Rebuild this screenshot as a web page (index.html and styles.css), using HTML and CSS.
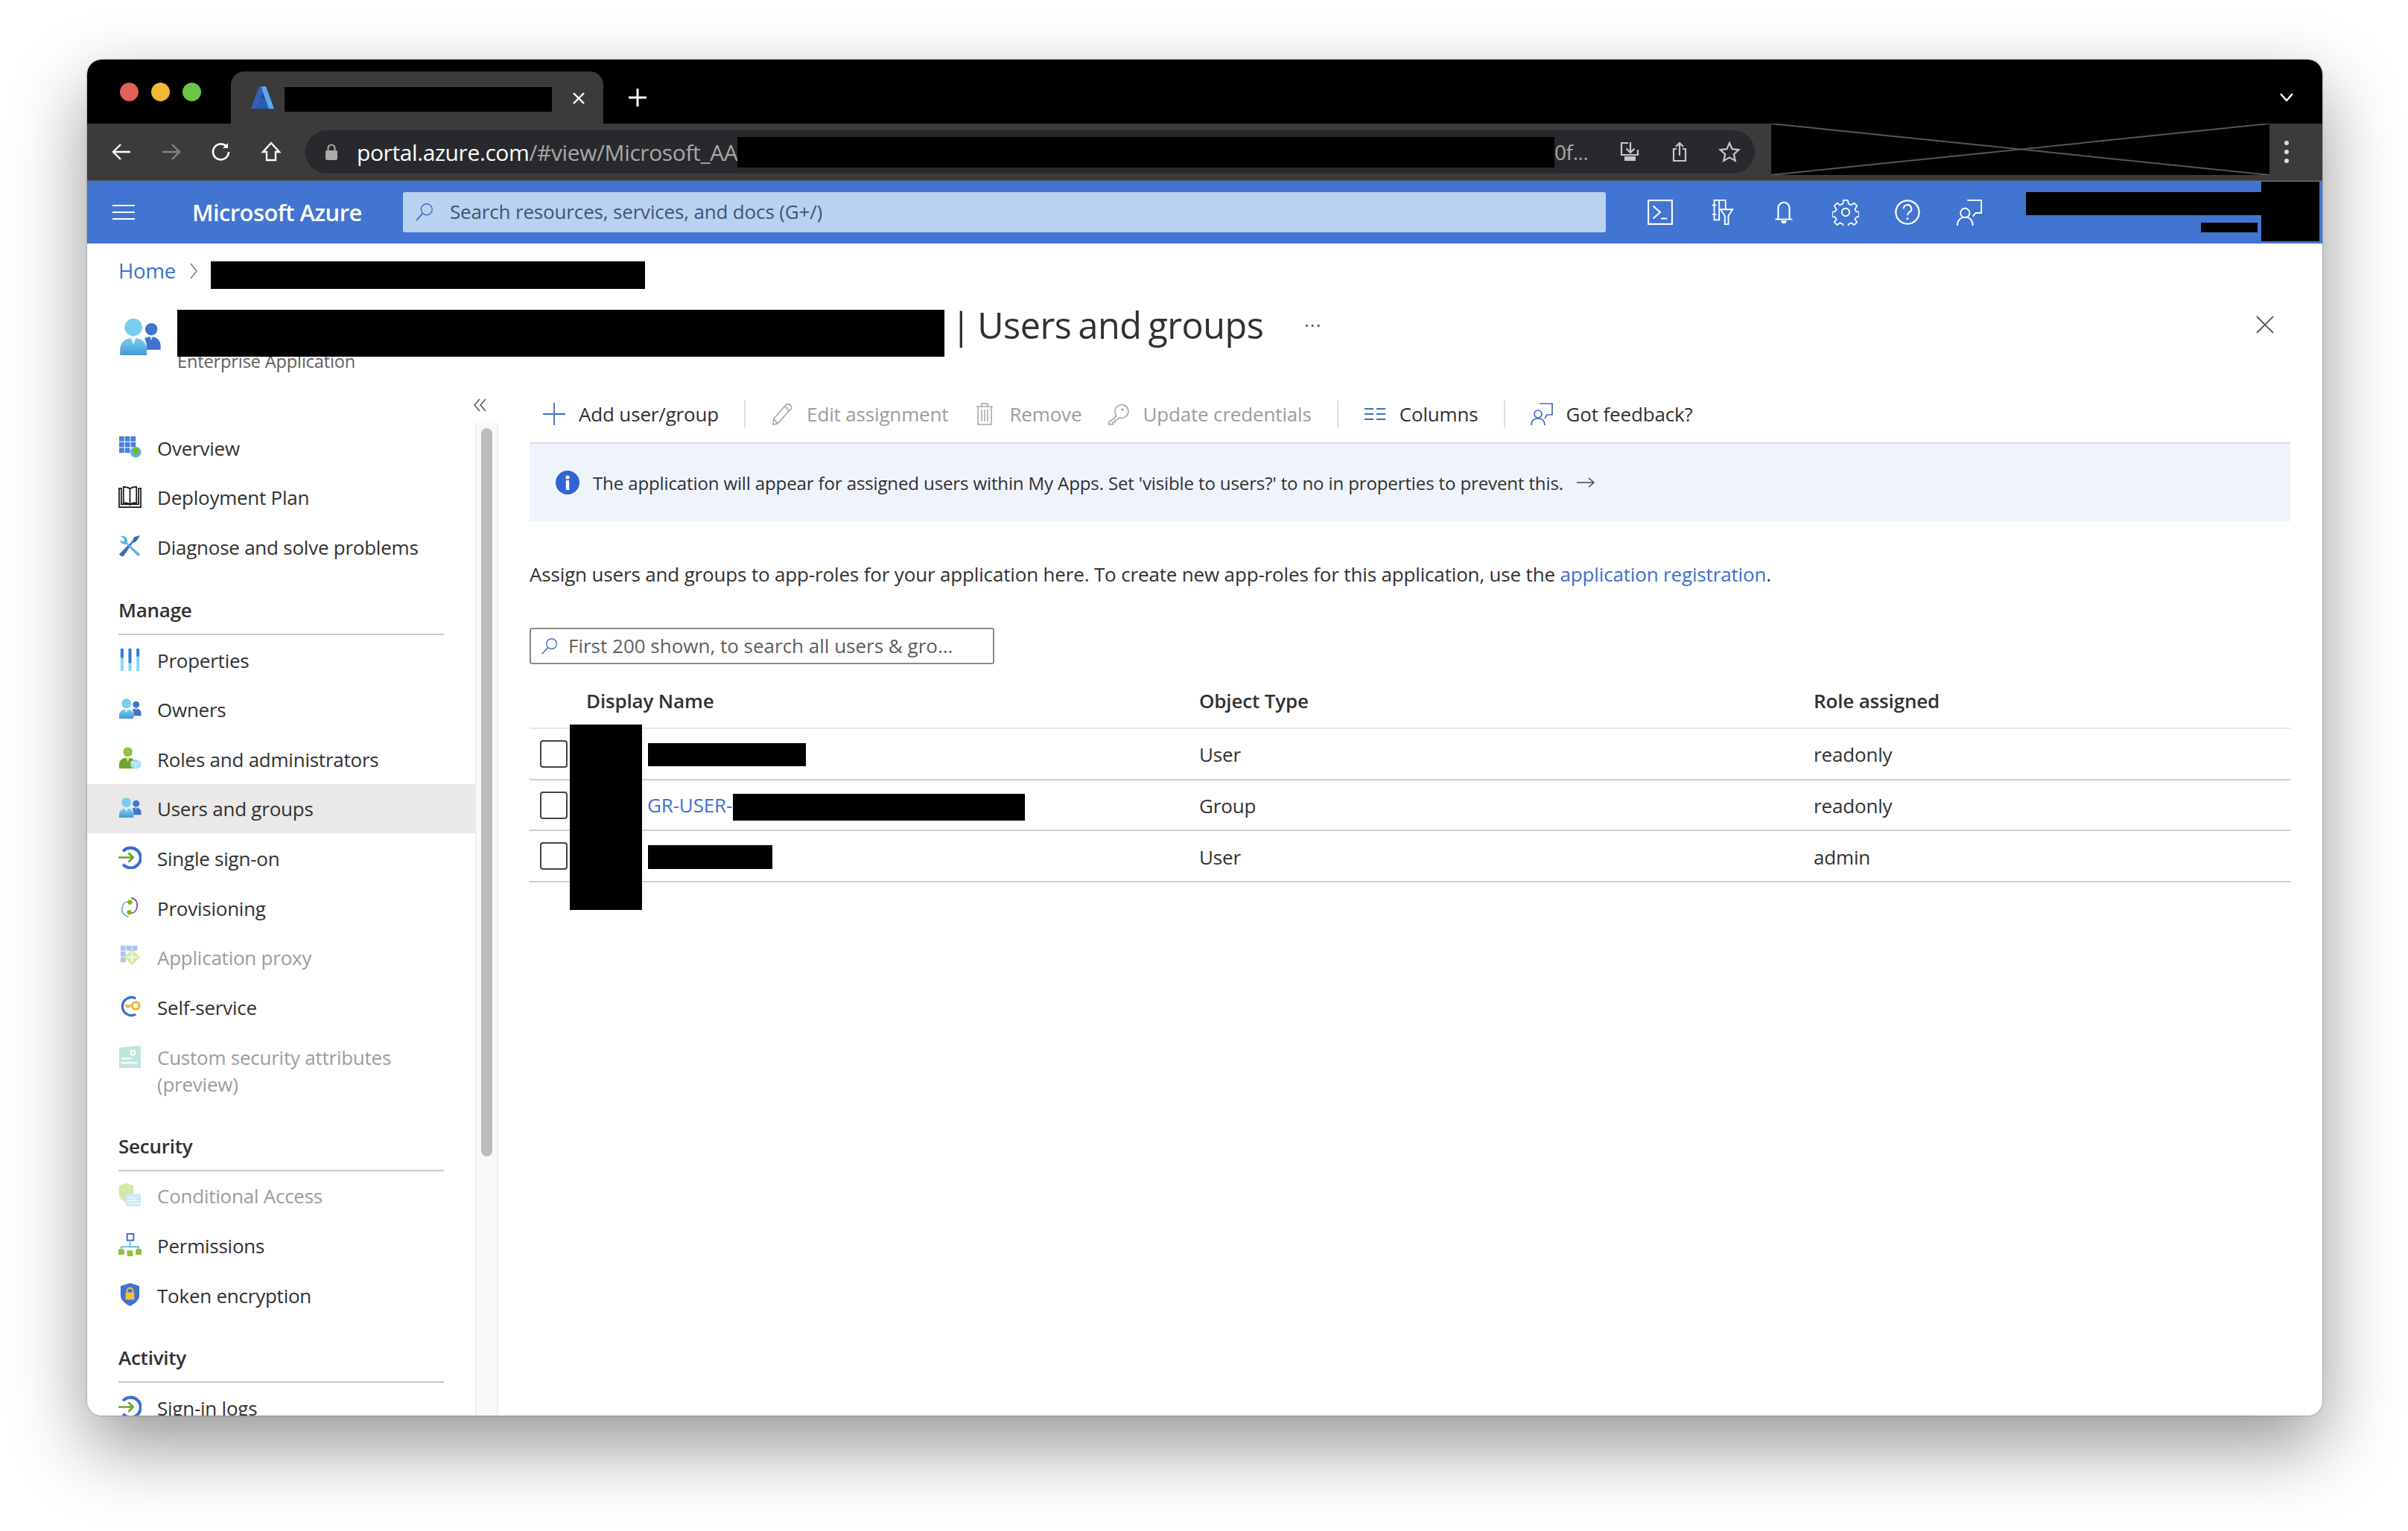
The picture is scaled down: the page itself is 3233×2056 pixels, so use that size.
FILE: index.html
```html
<!DOCTYPE html>
<html lang="en">
<head>
<meta charset="utf-8">
<title>Users and groups - Microsoft Azure</title>
<link rel="stylesheet" href="styles.css">
</head>
<body>
<svg class="defs" width="0" height="0" aria-hidden="true">
  <defs>
    <linearGradient id="gUser" x1="0" y1="0" x2="0" y2="1"><stop offset="0" stop-color="#7fd0f0"/><stop offset="1" stop-color="#3f9ad6"/></linearGradient>
    <symbol id="i-users" viewBox="0 0 32 28">
      <path d="M1 28v-4c0-6 4-9 10-9s10 3 10 9v4z" fill="url(#gUser)"/>
      <circle cx="11" cy="7" r="6.6" fill="#78cdf0"/>
      <path d="M9 15h4l-2 5z" fill="#e8f6fd"/>
      <path d="M21 24v-2c0-3-.7-5-1.6-6.5 1.100-.9 2.800-1.500 4.600-1.500 4.500 0 7.500 2.800 7.500 7v3z" fill="#3f74d0"/>
      <circle cx="24.500" cy="8.500" r="4.600" fill="#3f74d0"/>
      <path d="M23.500 14h2l-1 3z" fill="#dbe9fb"/>
    </symbol>
    <symbol id="i-signin" viewBox="0 0 30 30">
      <path d="M6 7a13 13 0 1 1 0 17" fill="none" stroke="#3a6fd0" stroke-width="4"/>
      <path d="M0 15h19M13 9l6 6-6 6" fill="none" stroke="#6aa524" stroke-width="2.600"/>
    </symbol>
  </defs>
</svg>

<div class="window">
  <header class="tabbar">
    <div class="lights"><span class="light red"></span><span class="light yellow"></span><span class="light green"></span></div>
    <div class="tab">
      <svg class="azure" viewBox="0 0 31 30"><path d="M11 0h9L8 30H0z" fill="#2f62b8"/><path d="M14 0h6l11 30h-9z" fill="#5aa9ea"/><path d="M12 18l6-5 6 17H8z" fill="#2a5cb2"/></svg>
      <span class="redact tab-redact"></span>
      <svg class="tab-close" viewBox="0 0 18 18"><path d="M2 2l14 14M16 2L2 16" stroke="#fff" stroke-width="2.400"/></svg>
    </div>
    <svg class="newtab" viewBox="0 0 26 26"><path d="M13 1v24M1 13h24" stroke="#fff" stroke-width="3"/></svg>
    <svg class="tab-menu" viewBox="0 0 20 14"><path d="M2 2l8 9 8-9" fill="none" stroke="#fff" stroke-width="2.400"/></svg>
  </header>

  <nav class="toolbar">
    <div class="navbtn"><svg viewBox="0 0 30 30"><path d="M27 15H4M14 5L4 15l10 10" fill="none" stroke="#fff" stroke-width="2.400"/></svg></div>
    <div class="navbtn"><svg viewBox="0 0 30 30"><path d="M3 15h23M16 5l10 10-10 10" fill="none" stroke="#858585" stroke-width="2.400"/></svg></div>
    <div class="navbtn"><svg viewBox="0 0 30 30"><path d="M25 15a10.500 10.500 0 1 1-3-7.500" fill="none" stroke="#fff" stroke-width="2.600"/><path d="M24 3v7h-7z" fill="#fff"/></svg></div>
    <div class="navbtn"><svg viewBox="0 0 30 30"><path d="M15 3L4 15h5v11h12V15h5z" fill="none" stroke="#fff" stroke-width="2.400"/></svg></div>
    <div class="omnibox">
      <svg class="lock" viewBox="0 0 18 24"><path d="M4.500 11V7a4.500 4.500 0 0 1 9 0v4" fill="none" stroke="#aaa" stroke-width="2.200"/><rect x="1" y="10" width="16" height="13" rx="2" fill="#aaa"/></svg>
      <span class="url"><span class="url-host">portal.azure.com</span>/#view/Microsoft_AA</span>
      <span class="redact url-redact"></span>
      <span class="url-end">0f...</span>
      <div class="omni-icons">
        <svg viewBox="0 0 30 30"><path d="M13 3H4v16h22v-7M16 2v14M10.500 10.500l5.500 5.500 5.500-5.500" fill="none" stroke="#c8c8c8" stroke-width="2.200"/><rect x="8" y="21" width="15" height="6" fill="#c8c8c8"/></svg>
        <svg viewBox="0 0 30 30"><path d="M11 11H7v16h16V11h-4M15 20V3M10 8l5-5 5 5" fill="none" stroke="#c8c8c8" stroke-width="2.200"/></svg>
        <svg viewBox="0 0 30 30"><path d="M15 3l3.600 8.200 8.900.9-6.700 6 1.900 8.800-7.700-4.500-7.700 4.500 1.900-8.800-6.700-6 8.900-.9z" fill="none" stroke="#c8c8c8" stroke-width="2.200"/></svg>
      </div>
    </div>
    <svg class="crossed" viewBox="0 0 669 69" preserveAspectRatio="none"><path d="M0 0L669 69M0 69L669 0" stroke="#555" stroke-width="2"/></svg>
    <div class="kebab"><i></i><i></i><i></i></div>
  </nav>

  <div class="portal-bar">
    <svg class="hamburger" viewBox="0 0 30 22"><path d="M0 2h30M0 11h30M0 20h30" stroke="#fff" stroke-width="1.800"/></svg>
    <div class="brand">Microsoft Azure</div>
    <div class="global-search">
      <svg class="mag" viewBox="0 0 28 28"><circle cx="17" cy="10" r="8" fill="none" stroke="#3f6ec4" stroke-width="1.600"/><path d="M11 16L2 26" stroke="#3f6ec4" stroke-width="1.800"/></svg>
      <span>Search resources, services, and docs (G+/)</span>
    </div>
    <div class="bar-icons">
      <div class="bar-icon"><svg viewBox="0 0 34 34"><rect x="2" y="2" width="30" height="30" fill="none" stroke="#fff" stroke-width="2"/><path d="M8 9l9 8-9 8M18 25h8" fill="none" stroke="#fff" stroke-width="2"/></svg></div>
      <div class="bar-icon"><svg viewBox="0 0 34 38"><path d="M22 14V2H6v28h8" fill="none" stroke="#fff" stroke-width="2"/><path d="M13 2v28M3 9h6M3 22h6" fill="none" stroke="#fff" stroke-width="2"/><path d="M15 15h17l-6 9v12h-5V24z" fill="none" stroke="#fff" stroke-width="2"/></svg></div>
      <div class="bar-icon"><svg viewBox="0 0 34 38"><path d="M9 28V13a8 8 0 0 1 16 0v15M5 29h24" fill="none" stroke="#fff" stroke-width="2.200"/><path d="M13 31a4 4 0 0 0 8 0z" fill="#fff"/></svg></div>
      <div class="bar-icon"><svg viewBox="0 0 38 38"><circle cx="19" cy="19" r="5.500" fill="none" stroke="#fff" stroke-width="2"/><path d="M16 2h6l1 5 4 2 4-3 4 4-3 5 2 3 4 1v6l-4 1-2 3 3 4-4 4-4-3-4 2-1 5h-6l-1-5-4-2-4 3-4-4 3-4-2-3-4-1v-6l4-1 2-3-3-5 4-4 4 3 4-2z" fill="none" stroke="#fff" stroke-width="1.800"/></svg></div>
      <div class="bar-icon"><svg viewBox="0 0 38 38"><circle cx="19" cy="19" r="16.500" fill="none" stroke="#fff" stroke-width="2.400"/><path d="M13.500 14a5.500 5.500 0 1 1 8 5c-2 1.300-2.500 2.300-2.500 4.500" fill="none" stroke="#fff" stroke-width="2.200"/><circle cx="19" cy="28" r="1.600" fill="#fff"/></svg></div>
      <div class="bar-icon"><svg viewBox="0 0 38 38"><path d="M16 2h20v18h-8l-4 5" fill="none" stroke="#fff" stroke-width="2"/><circle cx="13" cy="20" r="6.500" fill="none" stroke="#fff" stroke-width="2"/><path d="M2 38c0-7 4-12 11-12s11 5 11 12" fill="none" stroke="#fff" stroke-width="2"/></svg></div>
    </div>
    <span class="redact acct-name"></span>
    <span class="redact acct-tenant"></span>
    <span class="redact acct-pic"></span>
  </div>

  <main class="page">
    <div class="crumbs">
      <a class="link crumb-home">Home</a>
      <svg class="crumb-sep" viewBox="0 0 12 24"><path d="M2 2l8 10-8 10" fill="none" stroke="#777" stroke-width="1.400"/></svg>
      <span class="redact crumb-redact"></span>
    </div>

    <div class="page-head">
      <svg class="head-icon"><use href="#i-users"/></svg>
      <div class="titles">
        <h1 class="title"><span class="redact title-redact"></span><span class="title-text">| Users and groups</span><span class="title-more">···</span></h1>
        <div class="subtitle">Enterprise Application</div>
      </div>
      <svg class="page-close" viewBox="0 0 26 26"><path d="M2 2l22 22M24 2L2 24" stroke="#555" stroke-width="1.800"/></svg>
    </div>

    <div class="body-split">
      <aside class="sidebar">
        <div class="collapse">
          <svg viewBox="0 0 20 20"><path d="M9 2L2 10l7 8M17 2l-7 8 7 8" fill="none" stroke="#555" stroke-width="1.500"/></svg>
        </div>
        <div class="nav">
          <a class="nav-item"><svg class="nav-icon" viewBox="0 0 32 32"><g fill="#4a7fdc"><rect x="1" y="1" width="7" height="7"/><rect x="9" y="1" width="7" height="7"/><rect x="17" y="1" width="7" height="7"/><rect x="1" y="9" width="7" height="7"/><rect x="9" y="9" width="7" height="7"/><rect x="17" y="9" width="7" height="7"/><rect x="1" y="17" width="7" height="7"/><rect x="9" y="17" width="7" height="7"/></g><circle cx="24" cy="23" r="7.500" fill="#59b4d9"/><path d="M20 19l5-2 4 3-3 5-2 4-2-4z" fill="#7fba00"/></svg><span>Overview</span></a>
          <a class="nav-item"><svg class="nav-icon" viewBox="0 0 32 32"><path d="M1 5h3v22h24V5h3v26H1zM16 28V6c-2-3-6-3-9-3v22c4 0 7 0 9 3 2-3 5-3 9-3V3c-3 0-7 0-9 3" fill="none" stroke="#1a1a1a" stroke-width="1.800"/></svg><span>Deployment Plan</span></a>
          <a class="nav-item"><svg class="nav-icon" viewBox="0 0 32 32"><path d="M4 30l-3-3L19 9l3-6 8-2-5 8-6 3L7 30z" fill="#2e6fb5"/><path d="M3 2a7 7 0 0 1 9 9l18 16-3 3L11 13A7 7 0 0 1 2 7l4 3 3-3z" fill="#59b4d9"/></svg><span>Diagnose and solve problems</span></a>

          <div class="nav-group">Manage</div>
          <a class="nav-item"><svg class="nav-icon" viewBox="0 0 32 32"><g fill="#7fd7f7"><rect x="3" y="1" width="4" height="32"/><rect x="14" y="1" width="4" height="32"/><rect x="25" y="1" width="4" height="32"/></g><g fill="#3a78d4"><rect x="3" y="1" width="4" height="13"/><rect x="14" y="1" width="4" height="20"/><rect x="25" y="1" width="4" height="11"/></g></svg><span>Properties</span></a>
          <a class="nav-item"><svg class="nav-icon"><use href="#i-users"/></svg><span>Owners</span></a>
          <a class="nav-item"><svg class="nav-icon" viewBox="0 0 32 32"><circle cx="13" cy="7" r="6.500" fill="#8cc33f"/><path d="M1 30v-6c0-6 5-9 12-9s10 3 10 9v6z" fill="#6fa62c"/><path d="M11 15h4l-2 6z" fill="#e7f3cf"/><path d="M24 17l7 3.500v7L24 31l-7-3.500v-7z" fill="#9fe2f7"/><path d="M24 24l7-3.500M24 24l-7-3.500M24 24v7" stroke="#e8f8fd" fill="none"/></svg><span>Roles and administrators</span></a>
          <a class="nav-item is-active"><svg class="nav-icon"><use href="#i-users"/></svg><span>Users and groups</span></a>
          <a class="nav-item"><svg class="nav-icon" viewBox="0 0 30 30"><use href="#i-signin"/></svg><span>Single sign-on</span></a>
          <a class="nav-item"><svg class="nav-icon" viewBox="0 0 32 32"><path d="M18 3c6 1 9 6 8 12s-5 9-9 9" fill="none" stroke="#7a3fa8" stroke-width="1.700"/><path d="M14 29C8 28 4 23 5 17S10 8 14 8" fill="none" stroke="#59b4d9" stroke-width="1.700"/><circle cx="16" cy="9" r="3.200" fill="#7fba00"/><circle cx="15" cy="23" r="3.200" fill="#7fba00"/></svg><span>Provisioning</span></a>
          <a class="nav-item is-off"><svg class="nav-icon" viewBox="0 0 32 32"><g fill="#4a7fdc"><rect x="3" y="1" width="7" height="7"/><rect x="11" y="1" width="7" height="7"/><rect x="19" y="1" width="7" height="7"/><rect x="3" y="9" width="7" height="7"/><rect x="3" y="17" width="7" height="7"/></g><path d="M19 6l11 11-11 11L8 17z" fill="#a4cc3e"/><path d="M19 10v14M12 17h14" stroke="#fff" stroke-width="1.600"/></svg><span>Application proxy</span></a>
          <a class="nav-item"><svg class="nav-icon" viewBox="0 0 32 32"><path d="M24 5a12.500 12.500 0 1 0 0 22" fill="none" stroke="#3a6fd0" stroke-width="3.400"/><circle cx="24" cy="15" r="5" fill="none" stroke="#f0b429" stroke-width="3"/><path d="M9 15h11M12 15v3M15 15v3" stroke="#f0b429" stroke-width="2.400"/></svg><span>Self-service</span></a>
          <a class="nav-item is-off nav-item-tall"><svg class="nav-icon" viewBox="0 0 32 32"><path d="M1 4l30-3v31H1z" fill="#76c7b7"/><circle cx="20" cy="11" r="3" fill="none" stroke="#fff" stroke-width="2"/><path d="M4 19h14M4 25h22" stroke="#fff" stroke-width="2"/></svg><span>Custom security attributes<br>(preview)</span></a>

          <div class="nav-group">Security</div>
          <a class="nav-item is-off"><svg class="nav-icon" viewBox="0 0 32 32"><path d="M1 3l10-3 10 3v12c0 7-5 11-9 13C7 26 1 21 1 14z" fill="#a4cc3e"/><rect x="10" y="15" width="21" height="17" fill="#8fcdf2"/><path d="M12 20h17M12 24h17M12 28h17" stroke="#e4f3fc" stroke-width="1.400"/></svg><span>Conditional Access</span></a>
          <a class="nav-item"><svg class="nav-icon" viewBox="0 0 32 32"><rect x="12" y="1" width="9" height="9" fill="#fff" stroke="#3a6fd0" stroke-width="2"/><path d="M16 10v10M4 22v-3h24v3" fill="none" stroke="#59b4d9" stroke-width="1.800"/><g fill="#8cc33f"><rect x="0" y="22" width="8" height="8"/><rect x="12" y="24" width="8" height="8"/><rect x="24" y="22" width="8" height="8"/></g></svg><span>Permissions</span></a>
          <a class="nav-item"><svg class="nav-icon" viewBox="0 0 32 32"><path d="M16 0l13 4v13c0 7-7 12-13 15C10 29 3 24 3 17V4z" fill="#3f74d0"/><path d="M12 14v-3a4 4 0 0 1 8 0v3" fill="none" stroke="#f0c040" stroke-width="2"/><rect x="10" y="13" width="12" height="10" fill="#f0c040"/></svg><span>Token encryption</span></a>

          <div class="nav-group">Activity</div>
          <a class="nav-item"><svg class="nav-icon" viewBox="0 0 30 30"><use href="#i-signin"/></svg><span>Sign-in logs</span></a>
        </div>
        <div class="scrolltrack"><div class="scrollthumb"></div></div>
      </aside>

      <section class="content">
        <div class="commands">
          <a class="cmd"><svg viewBox="0 0 30 30"><path d="M15 0v30M0 15h30" stroke="#3e6fb8" stroke-width="1.800"/></svg><span>Add user/group</span></a>
          <i class="cmd-sep"></i>
          <a class="cmd is-off"><svg viewBox="0 0 30 30"><path d="M3 29l1-8L21 2c2-1 5 0 6 2s1 4-1 5L9 28z M4 21l5 7M19 5l6 6" fill="none" stroke="#a6a6a6" stroke-width="1.600"/></svg><span>Edit assignment</span></a>
          <a class="cmd is-off"><svg viewBox="0 0 30 30"><path d="M4 5h22M11 5V1h8v4M6 5v24h18V5M11 9v16M15 9v16M19 9v16" fill="none" stroke="#a6a6a6" stroke-width="1.500"/></svg><span>Remove</span></a>
          <a class="cmd is-off"><svg viewBox="0 0 30 30"><path d="M13 18L3 26v3h5v-3h3v-3h3l3-3a9 9 0 1 0-6-7z" fill="none" stroke="#a6a6a6" stroke-width="1.600"/><circle cx="21" cy="9" r="1.800" fill="#a6a6a6"/></svg><span>Update credentials</span></a>
          <i class="cmd-sep"></i>
          <a class="cmd"><svg viewBox="0 0 30 30"><path d="M1 8h12M1 15h12M1 22h12M17 8h12M17 15h12M17 22h12" stroke="#3e6fb8" stroke-width="1.800"/></svg><span>Columns</span></a>
          <i class="cmd-sep"></i>
          <a class="cmd"><svg viewBox="0 0 30 30"><path d="M12 1h17v15h-7l-3 5" fill="none" stroke="#3e6fb8" stroke-width="1.700"/><circle cx="10" cy="15" r="5" fill="none" stroke="#3e6fb8" stroke-width="1.700"/><path d="M1 30c0-6 3-9 9-9s9 3 9 9" fill="none" stroke="#3e6fb8" stroke-width="1.700"/></svg><span>Got feedback?</span></a>
        </div>

        <div class="infobar">
          <svg class="info-icon" viewBox="0 0 32 32"><circle cx="16" cy="16" r="16" fill="#2f63d6"/><circle cx="16" cy="9" r="2.600" fill="#fff"/><rect x="13.800" y="13" width="4.400" height="13" fill="#fff"/></svg>
          <span>The application will appear for assigned users within My Apps. Set 'visible to users?' to no in properties to prevent this.</span>
          <svg class="info-arrow" viewBox="0 0 26 16"><path d="M1 8h23M17 2l7 6-7 6" fill="none" stroke="#444" stroke-width="1.500"/></svg>
        </div>

        <p class="intro">Assign users and groups to app-roles for your application here. To create new app-roles for this application, use the <a class="link">application registration</a>.</p>

        <div class="filter">
          <svg viewBox="0 0 28 28"><circle cx="17" cy="10" r="8" fill="none" stroke="#3f6ec4" stroke-width="1.600"/><path d="M11 16L2 26" stroke="#3f6ec4" stroke-width="1.800"/></svg>
          <span>First 200 shown, to search all users &amp; gro...</span>
        </div>

        <div class="table">
          <div class="t-row t-head"><span></span><span>Display Name</span><span>Object Type</span><span>Role assigned</span></div>
          <div class="t-row"><span class="t-check"><i class="check"></i></span><span class="t-name"><i class="redact n1"></i></span><span class="t-text">User</span><span class="t-text">readonly</span></div>
          <div class="t-row"><span class="t-check"><i class="check"></i></span><span class="t-name"><a class="link">GR-USER-</a><i class="redact n2"></i></span><span class="t-text">Group</span><span class="t-text">readonly</span></div>
          <div class="t-row"><span class="t-check"><i class="check"></i></span><span class="t-name"><i class="redact n3"></i></span><span class="t-text">User</span><span class="t-text">admin</span></div>
          <span class="redact avatars"></span>
        </div>
      </section>
    </div>
  </main>
</div>
</body>
</html>
```

FILE: styles.css
```css
* { box-sizing: border-box; }
html, body { margin: 0; height: 2056px; overflow: hidden; background: #fff; }
body {
  padding: 80px 0 0 117px;
  font-family: "Open Sans", "Noto Sans", sans-serif;
  font-size: 26px;
  letter-spacing: -0.16px;
  color: #323130;
}
.defs { position: absolute; }
.redact { display: inline-block; background: #000; flex: none; }
.link { color: #3d6fcf; text-decoration: none; }

.window {
  position: relative;
  width: 3001px;
  height: 1821px;
  display: flex;
  flex-direction: column;
  overflow: hidden;
  border-radius: 20px;
  background: #fff;
}
body::before {
  content: "";
  position: absolute;
  left: 117px; top: 80px;
  width: 3001px; height: 1821px;
  border-radius: 20px;
  box-shadow: 0 40px 100px rgba(0,0,0,.42), 0 0 2px rgba(0,0,0,.55);
}

/* Chrome tab strip */
.tabbar { position: relative; flex: none; height: 86px; background: #000; display: flex; align-items: flex-end; }
.lights { position: absolute; left: 44px; top: 31px; display: flex; gap: 17px; }
.light { width: 25px; height: 25px; border-radius: 50%; }
.red { background: #e2605a; }
.yellow { background: #f1b83a; }
.green { background: #6cc644; }
.tab {
  margin-left: 193px;
  width: 500px;
  height: 70px;
  background: #3b3b3b;
  border-radius: 18px 18px 0 0;
  display: flex;
  align-items: flex-start;
  padding: 20px 0 0 27px;
}
.azure { width: 31px; height: 30px; flex: none; }
.tab-redact { width: 359px; height: 33px; margin: 1px 0 0 14px; }
.tab-close { width: 18px; height: 18px; flex: none; margin: 7px 0 0 27px; }
.newtab { width: 26px; height: 26px; flex: none; margin: 0 0 22px 33px; }
.tab-menu { position: absolute; right: 38px; top: 44px; width: 20px; height: 14px; }

/* Chrome toolbar */
.toolbar {
  flex: none;
  height: 77px;
  padding-left: 12px;
  background: #3b3b3b;
  border-bottom: 1px solid #555;
  display: flex;
  align-items: center;
}
.navbtn { width: 67px; display: flex; justify-content: center; }
.navbtn svg { width: 30px; height: 30px; }
.omnibox {
  margin-left: 13px;
  width: 1946px;
  height: 58px;
  border-radius: 29px;
  background: #28292c;
  display: flex;
  align-items: center;
  padding-left: 26px;
  color: #a8a8a8;
  font-size: 30px;
  letter-spacing: -0.4px;
}
.lock { width: 18px; height: 24px; flex: none; }
.url { width: 511px; margin-left: 25px; white-space: nowrap; overflow: hidden; flex: none; }
.url-host { color: #fff; }
.url-redact { width: 1097px; height: 41px; }
.url-end { width: 60px; flex: none; font-size: 28px; }
.omni-icons { display: flex; gap: 37px; margin-left: 26px; }
.omni-icons svg { width: 30px; height: 30px; flex: none; }
.crossed { width: 669px; height: 69px; margin: 0 0 7px 22px; background: #000; flex: none; }
.kebab { width: 46px; display: flex; flex-direction: column; align-items: center; gap: 6px; }
.kebab i { width: 6px; height: 6px; border-radius: 50%; background: #ddd; }

/* Portal bar */
.portal-bar {
  position: relative;
  flex: none;
  height: 84px;
  background: #4275d1;
  display: flex;
  align-items: center;
  color: #fff;
}
.hamburger { width: 30px; height: 22px; margin: 0 19px 0 34px; flex: none; }
.brand { width: 341px; padding-left: 58px; flex: none; font-size: 31px; font-weight: 600; letter-spacing: -0.6px; }
.global-search {
  width: 1615px;
  height: 54px;
  background: #b9d2ef;
  border-radius: 3px;
  display: flex;
  align-items: center;
  padding-left: 16px;
  flex: none;
  color: #3e5378;
}
.global-search span { margin-top: -2px; }
.mag { width: 26px; height: 26px; margin-right: 21px; flex: none; }
.bar-icons { display: flex; margin-left: 31px; }
.bar-icon { width: 83px; display: flex; justify-content: center; }
.bar-icon svg { width: 36px; height: 36px; }
.acct-name { position: absolute; left: 2603px; top: 15px; width: 329px; height: 31px; }
.acct-tenant { position: absolute; left: 2838px; top: 56px; width: 76px; height: 13px; }
.acct-pic { position: absolute; left: 2919px; top: 1px; width: 78px; height: 80px; }

/* Page */
.page { flex: 1; min-height: 0; display: flex; flex-direction: column; }
.crumbs { flex: none; height: 76px; padding-left: 42px; display: flex; align-items: center; }
.crumb-home { font-size: 27.5px; margin-top: -3px; }
.crumb-sep { width: 12px; height: 24px; margin: -2px 17px 0 18px; flex: none; }
.crumb-redact { width: 583px; height: 37px; margin-top: 8px; }

.page-head { flex: none; height: 115px; padding-left: 42px; display: flex; align-items: flex-start; position: relative; }
.head-icon { width: 58px; height: 50px; margin: 24px 21px 0 0; flex: none; }
.titles { display: flex; flex-direction: column; padding-top: 13px; }
.title { margin: 0; height: 63px; display: flex; align-items: center; font-size: 48.5px; font-weight: 400; letter-spacing: -0.5px; word-spacing: -3px; position: relative; z-index: 1; }
.title-redact { width: 1030px; height: 63px; }
.title-text { margin: -24px 0 0 9px; white-space: nowrap; width: 474px; flex: none; }
.title-more { font-size: 26px; letter-spacing: 1px; color: #555; margin-top: -24px; }
.subtitle { font-size: 23.6px; color: #605e5c; line-height: 28px; margin-top: -8px; }
.page-close { position: absolute; right: 64px; top: 20px; width: 26px; height: 26px; }

.body-split { flex: 1; min-height: 0; display: flex; }

/* Left menu */
.sidebar {
  flex: none;
  width: 552px;
  display: grid;
  grid-template-columns: 521px 31px;
  grid-template-rows: 50px 1fr;
  min-height: 0;
  letter-spacing: -0.24px;
}
.collapse { grid-column: 1 / 3; display: flex; justify-content: flex-end; align-items: center; padding: 2px 14px 0 0; }
.collapse svg { width: 20px; height: 20px; }
.nav { overflow: hidden; min-height: 0; }
.nav-item { height: 66.6px; display: flex; align-items: center; padding-left: 42px; color: #323130; }
.nav-item > span { margin-left: 21px; padding-top: 1px; white-space: nowrap; }
.nav-icon { width: 31px; height: 31px; flex: none; margin-top: -2px; }
.nav-item.is-active { background: #eae8e8; }
.nav-item.is-off { color: #9d9d9d; }
.nav-item.is-off .nav-icon { opacity: .45; }
.nav-item-tall { height: 102px; align-items: flex-start; padding-top: 15px; line-height: 36px; }
.nav-item-tall .nav-icon { margin-top: 2px; }
.nav-group {
  margin: 0 42px 0 42px;
  height: 85px;
  padding-top: 34px;
  line-height: 34px;
  font-weight: 600;
  border-bottom: 2px solid #c8c8c8;
}
.scrolltrack { background: #f9f9f9; border-left: 2px solid #eee; border-right: 2px solid #eee; padding: 7px 6px 0 6px; min-height: 0; }
.scrollthumb { height: 978px; background: #bdbdbd; border-radius: 9px; }

/* Main pane */
.content { flex: none; width: 2364px; margin-left: 42px; }
.commands { border-bottom: 2px solid #ddd; height: 78px; padding: 0 0 0 18px; display: flex; align-items: center; gap: 34px; }
.cmd { display: flex; align-items: center; gap: 18px; color: #323130; white-space: nowrap; }
.cmd svg { width: 30px; height: 30px; flex: none; }
.cmd.is-off { color: #9d9d9d; }
.cmd-sep { width: 2px; height: 36px; background: #ddd; flex: none; }
.infobar { height: 104px; background: #eff4fc; display: flex; align-items: center; padding-left: 35px; font-size: 24.1px; }
.info-icon { width: 32px; height: 32px; margin-right: 18px; flex: none; }
.info-arrow { width: 26px; height: 16px; margin-left: 17px; flex: none; }
.intro { margin: 50px 0 0; line-height: 42px; height: 42px; white-space: nowrap; }
.filter { width: 624px; height: 49px; margin-top: 51px; border: 2px solid #8a8a8a; border-radius: 3px; display: flex; align-items: center; padding-left: 13px; color: #605e5c; }
.filter svg { width: 24px; height: 24px; margin-right: 13px; flex: none; }
.filter span { white-space: nowrap; letter-spacing: 0; margin-top: -2px; }
.table { position: relative; }
.t-row { display: grid; grid-template-columns: 76px 823px 825px 1fr; align-items: center; height: 68.7px; border-bottom: 2px solid #cfcfcf; }
.t-head { height: 87px; padding-top: 13px; font-weight: 600; border-bottom-color: #e8e8e8; }
.t-head span:first-child { height: 0; }
.t-text { padding-top: 2px; }
.t-check { padding-left: 14px; display: flex; }
.check { width: 37px; height: 37px; border: 2px solid #444; border-radius: 4px; background: #fff; }
.t-name { padding-left: 83px; display: flex; align-items: center; height: 100%; position: relative; }
.t-name .link { margin-left: -1px; }
.n1 { width: 212px; height: 31px; margin-top: 2px; }
.n2 { width: 392px; height: 36px; position: absolute; left: 197px; top: 18px; }
.n3 { width: 167px; height: 32px; margin-top: 2px; }
.avatars { position: absolute; left: 54px; top: 81px; width: 97px; height: 249px; }
```
